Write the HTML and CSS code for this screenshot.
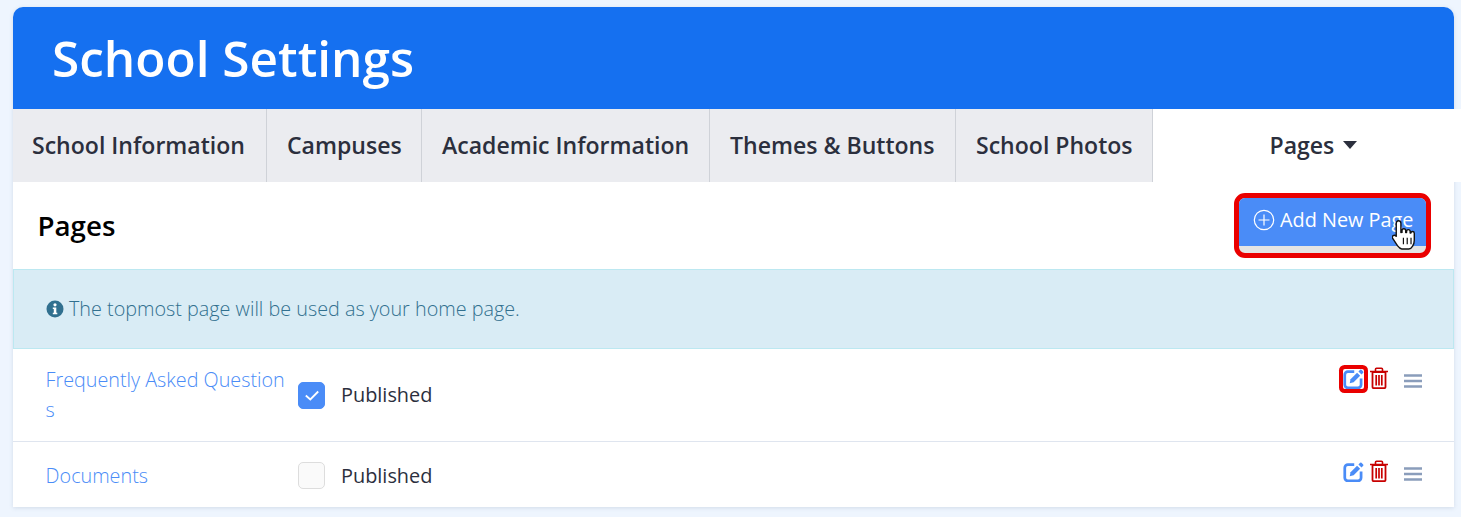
FILE: index.html
```html
<!DOCTYPE html>
<html lang="en">
<head>
<meta charset="utf-8">
<title>School Settings</title>
<link rel="stylesheet" href="styles.css">
</head>
<body>
<main class="card">
  <header class="banner"><h1>School Settings</h1></header>
  <nav class="tabs">
    <a class="tab t1">School Information</a>
    <a class="tab t2">Campuses</a>
    <a class="tab t3">Academic Information</a>
    <a class="tab t4">Themes &amp; Buttons</a>
    <a class="tab t5">School Photos</a>
    <a class="tab active">Pages <span class="caret"></span></a>
  </nav>
  <section class="head">
    <h2>Pages</h2>
    <div class="mark-btn">
      <button class="add">
        <svg class="plus" viewBox="0 0 22 22" width="22" height="22"><circle cx="11" cy="11" r="9.7" fill="none" stroke="#fff" stroke-width="1.2"/><path d="M11 5.5v11M5.5 11h11" stroke="#fff" stroke-width="1.2"/></svg>
        Add New Page
      </button>
      <svg class="hand" viewBox="1 2 23 29" width="25" height="32"><path d="M7 2.5c1.300 0 2.200 1 2.200 2.200v8.600l1-.1v-1.500c0-1 .8-1.800 1.700-1.800s1.700.8 1.700 1.800v1.600h.8v-1c0-1 .8-1.700 1.600-1.700s1.700.7 1.700 1.700v1.500h.7c0-.9.8-1.400 1.500-1.400s1.600.7 1.600 1.600v6.300c0 3.800-2.400 8.100-5 8.100h-6.500c-1.700 0-2.800-1.400-4-3L1.800 19c-.8-1-.6-2.200.3-2.800.9-.6 2-.3 2.700.5l.1.100V4.700C4.900 3.500 5.800 2.500 7 2.500z" fill="#fff" stroke="#111" stroke-width="1.300" stroke-linejoin="round"/><path d="M11.500 18v6M15 18v6M18.500 18v6" stroke="#111" stroke-width="1.100"/></svg>
    </div>
  </section>
  <div class="alert">
    <svg class="info" viewBox="0 0 18 18" width="18" height="18"><circle cx="9" cy="9" r="8.500" fill="#31708f"/><circle cx="9" cy="4.800" r="1.600" fill="#fff"/><path d="M6.800 7.400h3.500v5.300h1v1.500H6.800v-1.500h1V8.900h-1z" fill="#fff"/></svg>
    The topmost page will be used as your home page.
  </div>
  <div class="row first">
    <a class="name">Frequently Asked Questions</a>
    <label class="pub"><span class="box on"><svg viewBox="0 0 16 16" width="16" height="16"><path d="M1.800 8.500l4.500 4 7.900-8" fill="none" stroke="#fff" stroke-width="1.800"/></svg></span><span class="pub-text">Published</span></label>
    <div class="actions">
      <svg class="edit marked" viewBox="0.8 1 19 19" width="21" height="20"><path d="M11 3.500H5a3 3 0 0 0-3 3v9.500a3 3 0 0 0 3 3h9.500a3 3 0 0 0 3-3v-6" fill="none" stroke="#4a8cf7" stroke-width="2.600"/><path d="M7.500 10.800l-.8 3.700 3.700-.8 6.200-6.200-2.900-2.900z" fill="#4a8cf7"/><path d="M15 3.300l2.900 2.900 1.600-1.600a1 1 0 0 0 0-1.300l-1.600-1.600a1 1 0 0 0-1.300 0z" fill="#4a8cf7"/></svg>
      <svg class="trash" viewBox="0 0 20 22" width="20" height="22"><path d="M1 4.500h18M6.500 4.500V2.300a1 1 0 0 1 1-1h5a1 1 0 0 1 1 1v2.200" fill="none" stroke="#c80000" stroke-width="1.600"/><path d="M3.500 5h13v15a1.200 1.200 0 0 1-1.200 1.200H4.700A1.200 1.200 0 0 1 3.500 20z" fill="none" stroke="#c80000" stroke-width="1.800"/><path d="M7.200 8v10.500M10 8v10.500M12.800 8v10.500" stroke="#c80000" stroke-width="1.700"/></svg>
      <svg class="bars" viewBox="0 0 18 14" width="18" height="14"><path d="M0 1.500h18M0 7h18M0 12.500h18" stroke="#8a9dbb" stroke-width="2.400"/></svg>
    </div>
  </div>
  <div class="row second">
    <a class="name">Documents</a>
    <label class="pub"><span class="box"></span><span class="pub-text">Published</span></label>
    <div class="actions">
      <svg class="edit" viewBox="0.8 1 19 19" width="21" height="20"><path d="M11 3.500H5a3 3 0 0 0-3 3v9.500a3 3 0 0 0 3 3h9.500a3 3 0 0 0 3-3v-6" fill="none" stroke="#4a8cf7" stroke-width="2.600"/><path d="M7.500 10.800l-.8 3.700 3.700-.8 6.200-6.200-2.900-2.900z" fill="#4a8cf7"/><path d="M15 3.300l2.900 2.900 1.600-1.600a1 1 0 0 0 0-1.300l-1.600-1.600a1 1 0 0 0-1.300 0z" fill="#4a8cf7"/></svg>
      <svg class="trash" viewBox="0 0 20 22" width="20" height="22"><path d="M1 4.500h18M6.500 4.500V2.300a1 1 0 0 1 1-1h5a1 1 0 0 1 1 1v2.200" fill="none" stroke="#c80000" stroke-width="1.600"/><path d="M3.500 5h13v15a1.200 1.200 0 0 1-1.200 1.200H4.700A1.200 1.200 0 0 1 3.500 20z" fill="none" stroke="#c80000" stroke-width="1.800"/><path d="M7.200 8v10.500M10 8v10.500M12.800 8v10.500" stroke="#c80000" stroke-width="1.700"/></svg>
      <svg class="bars" viewBox="0 0 18 14" width="18" height="14"><path d="M0 1.500h18M0 7h18M0 12.500h18" stroke="#8a9dbb" stroke-width="2.400"/></svg>
    </div>
  </div>
</main>
</body>
</html>
```
FILE: styles.css
```css
* { box-sizing: border-box; }
html, body { margin: 0; height: 517px; overflow: hidden; }
body {
  background: #eef5fe;
  font-family: "Open Sans", sans-serif;
  color: #2b2f3d;
  padding: 7px 7px 0 13px;
}
.card {
  background: #fff;
  border-radius: 10px 10px 0 0;
  box-shadow: 0 1px 4px rgba(90, 110, 140, .18);
  height: 500px;
}
.banner {
  height: 102px;
  background: #1570f0;
  border-radius: 10px 10px 0 0;
  padding: 2px 39px 0;
  display: flex;
  align-items: center;
}
.banner h1 {
  margin: 0;
  color: #fff;
  font-size: 49.500px;
  font-weight: 600;
  line-height: 1;
}
.tabs {
  display: flex;
  height: 73px;
  margin-right: -7px;
  background: #fff;
}
.tab {
  display: flex;
  align-items: center;
  padding: 0 20px 2px;
  background: #ebecf0;
  border-right: 1px solid #cfd2d8;
  font-size: 23.050px;
  font-weight: 600;
  white-space: nowrap;
}
.t1 { padding-left: 19px; width: 254px; }
.t2 { width: 155px; }
.t3 { width: 288px; }
.t4 { width: 246px; }
.t5 { width: 197px; }
.tab.active {
  background: #fff;
  border: 0;
  flex: 1;
  padding-left: 116.500px;
  gap: 9px;
}
.caret {
  width: 0;
  height: 0;
  border-left: 7.500px solid transparent;
  border-right: 7.500px solid transparent;
  border-top: 8px solid #2b2f3d;
}
.head {
  height: 87px;
  display: flex;
  align-items: center;
  justify-content: space-between;
  padding: 0 23px 0 24.500px;
}
.head h2 {
  margin: 0 0 2px;
  font-size: 27.700px;
  font-weight: 600;
  color: #000;
}
.mark-btn {
  position: relative;
  width: 197px;
  height: 65px;
  margin-top: -1px;
  border: 5px solid #ea0000;
  border-radius: 11px;
  background: #e4e4e4;
}
.add {
  display: flex;
  align-items: center;
  gap: 5px;
  width: 187px;
  height: 48px;
  padding: 0 0 4px 14px;
  border: 0;
  border-radius: 6px 6px 0 0;
  background: #4a8cf7;
  color: #fff;
  font: 400 19.850px "Open Sans", sans-serif;
  white-space: nowrap;
}
.hand {
  position: absolute;
  left: 153px;
  top: 22px;
}
.alert {
  height: 80px;
  display: flex;
  align-items: center;
  gap: 5px;
  padding: 0 0 1px 32px;
  background: #d9ecf5;
  border: 1px solid #bce8f1;
  color: #31708f;
  font-size: 19.800px;
  font-weight: 300;
}
.row {
  position: relative;
  display: grid;
  grid-template-columns: 252px 1fr auto;
  padding: 0 32px 0 33px;
  align-items: center;
  border-bottom: 1px solid #dfe5ef;
}
.row.first { height: 93px; }
.row.second { height: 66px; border: 0; }
.name {
  width: 240px;
  margin-left: -.4px;
  color: #4a8cf7;
  font-size: 19.750px;
  font-weight: 300;
  line-height: 30px;
  word-break: break-all;
}
.second .name { padding-top: 1px; }
.pub {
  display: flex;
  align-items: center;
  gap: 16px;
  font-size: 19.900px;
  font-weight: 400;
}
.first .pub-text { margin-bottom: 2px; }
.box {
  display: flex;
  align-items: center;
  justify-content: center;
  width: 27px;
  height: 27px;
  background: #fafafa;
  border: 1px solid #ddd;
  border-radius: 5px;
}
.box.on { background: #4a8cf7; border-color: #4a8cf7; }
.actions {
  align-self: start;
  display: flex;
  align-items: flex-end;
  margin-top: 18px;
}
.marked {
  background: #fff;
  border-radius: 2px;
  box-shadow: 0 0 0 4px #ea0000;
}
.trash { margin-left: 5px; }
.bars { margin: 0 0 1px 15px; }
```
